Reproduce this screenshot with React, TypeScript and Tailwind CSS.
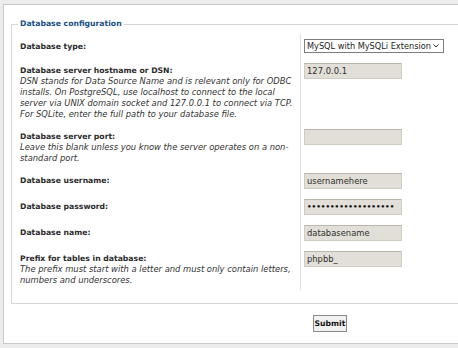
import React from "react";

const font = { fontFamily: '"DejaVu Sans", Verdana, sans-serif' };

interface RowProps {
  label: string;
  help?: React.ReactNode;
  children: React.ReactNode;
}

const Row: React.FC<RowProps> = ({ label, help, children }) => (
  <div className="flex">
    <div className="w-[289px] shrink-0 border-r border-[#e2e2e2] pl-[8px] pt-[7px] pb-[4px] leading-[11px]">
      <div className="text-[7.7px] font-bold text-[#2a2a2a]">{label}</div>
      {help && <div className="whitespace-nowrap text-[8.4px] italic text-[#333]">{help}</div>}
    </div>
    <div className="pl-[3px] pt-[5px] pb-[5px]">{children}</div>
  </div>
);

const TextBox: React.FC<{ value?: string; dots?: boolean }> = ({ value, dots }) => (
  <div
    className={
      "flex h-[16px] w-[98px] items-center overflow-hidden whitespace-nowrap border border-[#cfccc3] border-t-[#b9b6ad] bg-[#e1dfd7] pl-[2px] leading-none " +
      (dots ? "text-[7.2px] font-bold text-[#111]" : "text-[8.4px] text-[#2e2e2e]")
    }
  >
    {value}
  </div>
);

export default function App() {
  return (
    <div className="relative h-[348px] w-[458px] overflow-hidden bg-[#ececec] pl-[3px] pt-[4px]" style={font}>
      <div className="box-border h-[340px] w-[480px] border border-r-0 border-[#c9c9c9] bg-white pl-[7px]">
        <fieldset className="mt-[13px] border border-r-0 border-[#d6d6d6] pb-[13px]">
          <legend className="ml-[6px] px-[2px] text-[7.7px] font-bold leading-[12px] text-[#184f86]">
            Database configuration
          </legend>
          <div className="pt-[4px]">
            <Row label="Database type:">
              <div className="flex h-[14px] w-[140px] items-center justify-between overflow-hidden whitespace-nowrap border border-[#7d7d7d] bg-white pl-[2px] pr-[4px] text-[8.2px] leading-none text-[#222]">
                <span>MySQL with MySQLi Extension</span>
                <svg width="6" height="4" viewBox="0 0 6 4" fill="none" className="shrink-0">
                  <path d="M0.5 0.5 L3 3 L5.5 0.5" stroke="#333" strokeWidth="1" />
                </svg>
              </div>
            </Row>
            <Row
              label="Database server hostname or DSN:"
              help={
                <>
                  DSN stands for Data Source Name and is relevant only for ODBC
                  <br />
                  installs. On PostgreSQL, use localhost to connect to the local
                  <br />
                  server via UNIX domain socket and 127.0.0.1 to connect via TCP.
                  <br />
                  For SQLite, enter the full path to your database file.
                </>
              }
            >
              <TextBox value="127.0.0.1" />
            </Row>
            <Row
              label="Database server port:"
              help={
                <>
                  Leave this blank unless you know the server operates on a non-
                  <br />
                  standard port.
                </>
              }
            >
              <TextBox />
            </Row>
            <Row label="Database username:">
              <TextBox value="usernamehere" />
            </Row>
            <Row label="Database password:">
              <TextBox value="•••••••••••••••••••" dots />
            </Row>
            <Row label="Database name:">
              <TextBox value="databasename" />
            </Row>
            <Row
              label="Prefix for tables in database:"
              help={
                <>
                  The prefix must start with a letter and must only contain letters,
                  <br />
                  numbers and underscores.
                </>
              }
            >
              <TextBox value="phpbb_" />
            </Row>
          </div>
        </fieldset>
        <div className="mt-[11px] pl-[302px]">
          <button className="flex h-[17px] w-[34px] items-center justify-center border border-[#8a8a8a] bg-[#f1f1f1] text-[7.7px] font-bold leading-none text-[#111]">
            Submit
          </button>
        </div>
      </div>
    </div>
  );
}
